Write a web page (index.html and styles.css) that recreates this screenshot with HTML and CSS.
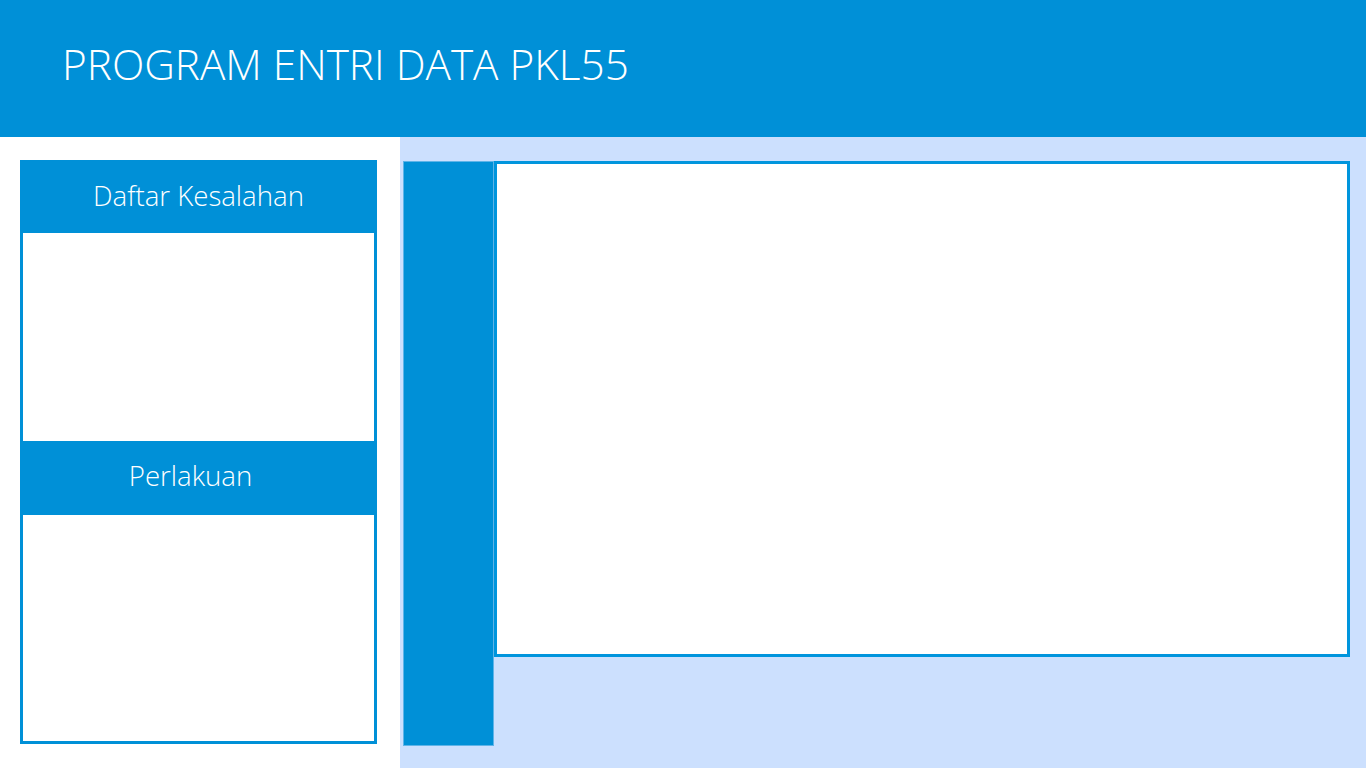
FILE: index.html
```html
<!DOCTYPE html>
<html lang="id">
<head>
<meta charset="utf-8">
<title>Program Entri Data PKL55</title>
<link rel="stylesheet" href="styles.css">
</head>
<body>
<header class="topbar">
  <h1 class="title">PROGRAM ENTRI DATA PKL55</h1>
</header>
<main class="main">
  <aside class="sidebar">
    <section class="card">
      <div class="card-head">Daftar Kesalahan</div>
      <div class="card-body card-body-1"></div>
      <div class="card-head card-head-2">Perlakuan</div>
      <div class="card-body card-body-2"></div>
    </section>
  </aside>
  <section class="workspace">
    <div class="rail"></div>
    <div class="canvas"></div>
  </section>
</main>
</body>
</html>
```
FILE: styles.css
```css
* { box-sizing: border-box; }
html, body { margin: 0; padding: 0; }
body {
  width: 1366px;
  height: 768px;
  overflow: hidden;
  font-family: "Open Sans", "Noto Sans", sans-serif;
  background: #ffffff;
}
.topbar {
  height: 137px;
  background: #0090d7;
  display: flex;
  align-items: center;
  padding-left: 62px;
  padding-bottom: 10px;
}
.title {
  margin: 0;
  color: #ffffff;
  font-weight: 300;
  font-size: 42.3px;
  letter-spacing: 0;
}
.main {
  display: flex;
  height: 631px;
}
.sidebar {
  width: 400px;
  flex: none;
  background: #ffffff;
  padding: 23px 23px 0 20px;
}
.card {
  width: 357px;
  height: 584px;
  border: 3px solid #0090d7;
  display: flex;
  flex-direction: column;
  background: #ffffff;
}
.card-head {
  height: 70px;
  flex: none;
  background: #0090d7;
  color: #ffffff;
  font-weight: 300;
  font-size: 27.6px;
  display: flex;
  align-items: center;
  justify-content: center;
  padding-bottom: 6px;
}
.card-head-2 {
  height: 74px;
  padding-right: 16px;
  padding-bottom: 7px;
}
.card-body-1 { height: 208px; flex: none; }
.card-body-2 { flex: 1; }
.workspace {
  flex: 1;
  background: #cce0fe;
  display: flex;
  align-items: flex-start;
  padding: 24px 0 0 3px;
}
.rail {
  width: 91px;
  height: 585px;
  flex: none;
  background: #0090d7;
  border: 1px solid #5fb4e8;
}
.canvas {
  width: 856px;
  height: 496px;
  flex: none;
  background: #ffffff;
  border: 3px solid #0095dd;
}
```
